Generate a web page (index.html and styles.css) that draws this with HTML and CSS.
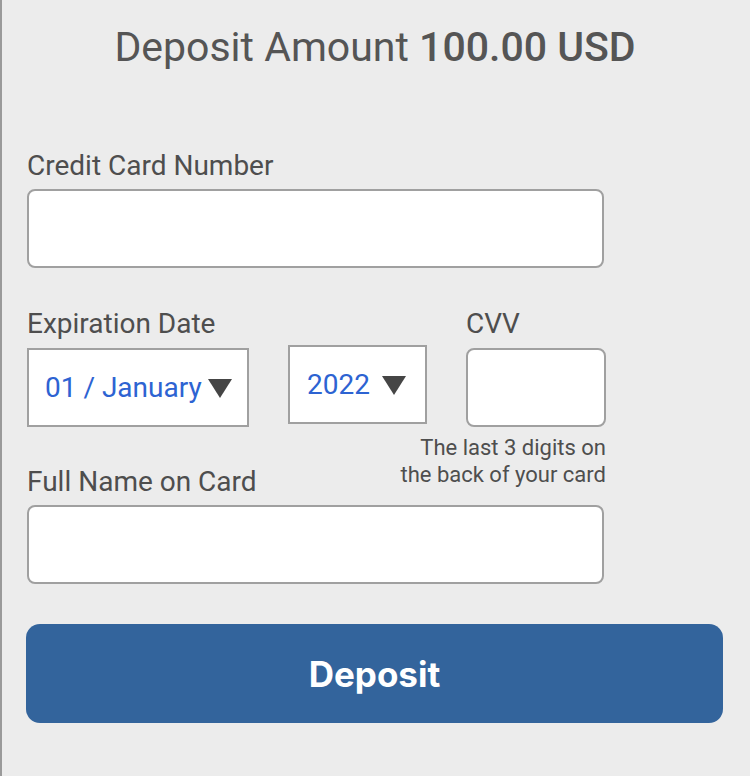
FILE: index.html
```html
<!DOCTYPE html>
<html lang="en">
<head>
<meta charset="utf-8">
<title>Deposit</title>
<link rel="stylesheet" href="styles.css">
</head>
<body>
<div class="page">
  <h1 class="title">Deposit Amount <span class="amount">100.00 USD</span></h1>
  <form class="form">
    <label class="label">Credit Card Number</label>
    <div class="input wide"></div>

    <div class="exp-grid">
      <div class="label exp-label">Expiration Date</div>
      <div class="label cvv-label">CVV</div>
      <div class="select month"><span class="sel-text">01 / January</span><span class="caret"></span></div>
      <div class="select year"><span class="sel-text">2022</span><span class="caret"></span></div>
      <div class="input cvv"></div>
      <div class="help">The last 3 digits on<br>the back of your card</div>
      <div class="label name-label">Full Name on Card</div>
    </div>
    <div class="input wide"></div>

    <div class="button">Deposit</div>
  </form>
</div>
</body>
</html>
```

FILE: styles.css
```css
html, body {
  margin: 0;
  padding: 0;
}
body {
  background: #ececec;
  font-family: Roboto, "Noto Sans", sans-serif;
  color: #505050;
}
.page {
  border-left: 2px solid #9a9a9a;
  min-height: 776px;
  box-sizing: border-box;
  padding: 23px 0 0 25px;
}
.title {
  margin: 0 0 0 -27px;
  text-align: center;
  font-size: 41px;
  line-height: 48px;
  font-weight: 400;
  color: #555555;
  width: 750px;
}
.amount {
  font-weight: 500;
}
.form {
  margin-top: 79px;
  display: flex;
  flex-direction: column;
  align-items: flex-start;
}
.label {
  display: block;
  font-size: 28px;
  line-height: 32px;
  color: #4e4e4e;
  white-space: nowrap;
}
.input {
  background: #ffffff;
  border: 2px solid #a0a0a0;
  border-radius: 8px;
  box-sizing: border-box;
  height: 79px;
}
.wide {
  width: 577px;
  margin-top: 7px;
}
.exp-grid {
  margin-top: 40px;
  display: grid;
  grid-template-columns: 222px 139px 140px;
  column-gap: 39px;
}
.exp-label { grid-column: 1; grid-row: 1; }
.cvv-label { grid-column: 3; grid-row: 1; }
.select {
  background: #ffffff;
  border: 2px solid #a0a0a0;
  box-sizing: border-box;
  height: 79px;
  margin-top: 8px;
  display: flex;
  align-items: center;
  padding-left: 16px;
  gap: 6px;
}
.month { grid-column: 1; grid-row: 2; }
.year {
  grid-column: 2;
  grid-row: 2;
  margin-top: 5px;
  margin-bottom: 3px;
  padding-left: 17px;
  gap: 12px;
}
.sel-text {
  font-size: 28px;
  color: #2d63d2;
}
.caret {
  width: 0;
  height: 0;
  border-left: 12px solid transparent;
  border-right: 12px solid transparent;
  border-top: 19px solid #454545;
  margin-top: 2px;
}
.cvv {
  grid-column: 3;
  grid-row: 2;
  margin-top: 8px;
}
.help {
  grid-column: 2 / 4;
  grid-row: 3;
  justify-self: end;
  text-align: right;
  font-size: 22px;
  line-height: 27px;
  color: #4e4e4e;
  margin-top: 7px;
}
.name-label {
  grid-column: 1;
  grid-row: 3;
  align-self: start;
  margin-top: 39px;
}
.button {
  margin-top: 40px;
  width: 697px;
  height: 99px;
  margin-left: -1px;
  background: #33649c;
  border-radius: 14px;
  color: #ffffff;
  font-family: Inter, "Liberation Sans", sans-serif;
  font-size: 35px;
  font-weight: 700;
  display: flex;
  align-items: center;
  justify-content: center;
}
```
